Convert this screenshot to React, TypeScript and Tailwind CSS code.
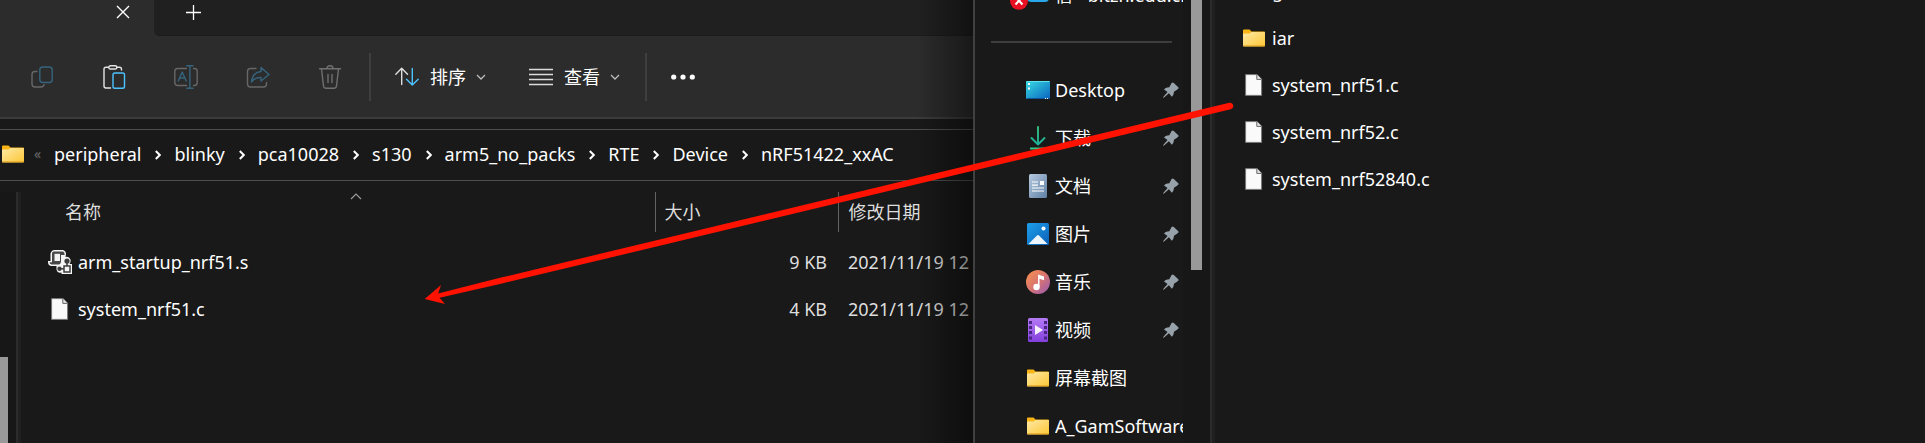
import type { ReactNode } from "react";

const FONT = "font-['Noto_Sans','Noto_Sans_CJK_SC',sans-serif]";

function FolderIcon() {
  return (
    <svg width="22" height="18" viewBox="0 0 22 18" aria-hidden="true">
      <defs>
        <linearGradient id="folder" x1="0" y1="0" x2="1" y2="1">
          <stop offset="0" stopColor="#ffe9a6" />
          <stop offset="1" stopColor="#fcc736" />
        </linearGradient>
      </defs>
      <path d="M0 1.5Q0 .5 1 .5H6.5L8.5 2.5H21Q22 2.5 22 3.500V8H0Z" fill="#f9b515" />
      <path d="M0 5.200Q0 4.400.8 4.400H6.500L8.500 3H22V16.500Q22 17.500 21 17.500H1Q0 17.500 0 16.500Z" fill="url(#folder)" />
      <path d="M.3 16.900H21.700" stroke="#dda021" strokeWidth="1" />
    </svg>
  );
}

function PageIcon() {
  return (
    <svg width="18" height="22" viewBox="0 0 18 22" aria-hidden="true">
      <path d="M.6.6H12L16.6 5.2V21.4H.6Z" fill="#fafafa" stroke="#777" strokeWidth="1" />
      <path d="M11.8.6V5.4H16.6" fill="#e6e6e6" stroke="#666" strokeWidth="1" />
    </svg>
  );
}

function ScriptIcon() {
  return (
    <svg width="24" height="24" viewBox="0 0 24 24" aria-hidden="true">
      <path d="M4 1Q5 0 6.500 0H15Q18 1 18 4L17.500 7Q21 6 22.500 9.500Q23 12 21.500 14H24V24H13.500V22.500Q9.500 23.500 8.500 19.500V16H3Q0 15.500 0 12V11H2.500V3.500Q2.800 2 4 1Z" fill="#f5f5f5" />
      <path d="M5.500 1.500H15Q17 2.500 16.500 5H13V12Q12.500 14.500 10.500 14.500H3.500Q1.500 14 1.500 12.300H4V3.500Q4 2 5.500 1.500Z" fill="#474747" />
      <path d="M6.500 3.800H12V11H6.500Z" fill="#f2f2f2" />
      <circle cx="19" cy="11" r="2.600" fill="#3d3d3d" />
      <path d="M19 13V16" stroke="#3d3d3d" strokeWidth="1.500" />
      <circle cx="11.500" cy="18.800" r="2.200" fill="#3d3d3d" />
      <path d="M12 18.800H16" stroke="#3d3d3d" strokeWidth="1.500" />
      <path d="M16 16H22V22H16Z" fill="#f5f5f5" stroke="#3d3d3d" strokeWidth="1.500" />
    </svg>
  );
}

function DesktopIcon() {
  return (
    <svg width="24" height="18" viewBox="0 0 24 18" aria-hidden="true">
      <defs>
        <linearGradient id="desktop" x1="0" y1="0" x2="1" y2="1">
          <stop offset="0" stopColor="#37dce0" />
          <stop offset="1" stopColor="#0a63c0" />
        </linearGradient>
      </defs>
      <rect width="24" height="18" rx="1" fill="url(#desktop)" />
      <path d="M.5.5H23.500" stroke="#5ee3ef" />
      <path d="M2 2H4V4H2ZM2 6.500H4V8.500H2Z" fill="#fff" />
      <path d="M1 17.500H23" stroke="#0b569b" />
      <path d="M19 17H20V18H19ZM21 17H22V18H21Z" fill="#fff" />
    </svg>
  );
}

function DownloadIcon() {
  return (
    <svg width="18" height="24" viewBox="0 0 18 24" fill="none" aria-hidden="true">
      <defs>
        <linearGradient id="download" x1="0" y1="0" x2="0" y2="24" gradientUnits="userSpaceOnUse">
          <stop offset="0" stopColor="#35c27c" />
          <stop offset="1" stopColor="#17a9a5" />
        </linearGradient>
      </defs>
      <path d="M9 1V18M2.500 12L9 18.500L15.500 12" stroke="url(#download)" strokeWidth="1.900" strokeLinecap="round" strokeLinejoin="round" />
      <path d="M1 22.500H17" stroke="#35cb8b" strokeWidth="2" />
    </svg>
  );
}

function DocumentIcon() {
  return (
    <svg width="18" height="24" viewBox="0 0 18 24" aria-hidden="true">
      <defs>
        <linearGradient id="document" x1="0" y1="0" x2="1" y2="1">
          <stop offset="0" stopColor="#b7cbe0" />
          <stop offset="1" stopColor="#5f7fa3" />
        </linearGradient>
      </defs>
      <rect width="18" height="24" rx="1.500" fill="url(#document)" />
      <path d="M3 8H9M3 11.200H9M3 14H15M3 17H15" stroke="#fff" strokeWidth="1.200" />
      <rect x="11" y="7" width="4" height="4" fill="#fff" />
    </svg>
  );
}

function PictureIcon() {
  return (
    <svg width="22" height="22" viewBox="0 0 22 22" aria-hidden="true">
      <defs>
        <linearGradient id="picture" x1="0" y1="0" x2="1" y2="1">
          <stop offset="0" stopColor="#1ea0ec" />
          <stop offset="1" stopColor="#0a5fb6" />
        </linearGradient>
      </defs>
      <rect width="22" height="22" rx="1.500" fill="url(#picture)" />
      <circle cx="16.500" cy="5.500" r="2" fill="#fff" />
      <path d="M1.500 21L10 12.400Q11 11.500 12 12.400L20.500 21Z" fill="#eef6fd" />
    </svg>
  );
}

function MusicIcon() {
  return (
    <svg width="24" height="24" viewBox="0 0 24 24" aria-hidden="true">
      <defs>
        <linearGradient id="music" x1="0" y1="0" x2="1" y2="1">
          <stop offset="0" stopColor="#fa9249" />
          <stop offset=".5" stopColor="#d97572" />
          <stop offset="1" stopColor="#9559b5" />
        </linearGradient>
      </defs>
      <circle cx="12" cy="12" r="12" fill="url(#music)" />
      <path d="M12 4.500L18 6.500V10.200L13.500 8.800V17H12Z" fill="#fff" />
      <circle cx="10.500" cy="17" r="3.200" fill="#fff" />
    </svg>
  );
}

function VideoIcon() {
  return (
    <svg width="20" height="24" viewBox="0 0 20 24" aria-hidden="true">
      <defs>
        <linearGradient id="video" x1="0" y1="0" x2="0" y2="1">
          <stop offset="0" stopColor="#b57af5" />
          <stop offset="1" stopColor="#8340dd" />
        </linearGradient>
      </defs>
      <rect width="20" height="24" rx="1.500" fill="url(#video)" />
      <path d="M1 3H4V6H1ZM1 8H4V11H1ZM1 13H4V16H1ZM1 18.500H4V21.500H1ZM16 3H19V6H16ZM16 8H19V11H16ZM16 13H19V16H16ZM16 18.500H19V21.500H16Z" fill="#48267f" />
      <path d="M7 7L15 12L7 17Z" fill="#f6f0ff" />
    </svg>
  );
}

function PinIcon() {
  return (
    <svg className="shrink-0" width="16" height="16" viewBox="0 0 16 16" aria-hidden="true">
      <path d="M0 15.200L4.500 10L1 7.500Q2 5.800 6.300 5.300L8.600 1Q9.600 0 10.800 1L15.300 5.200Q16 6 15 7L11 9.700Q10.800 13.300 8.800 14.800L5.900 11.300L.8 15.800Z" fill="#97a1a9" />
    </svg>
  );
}

function CloudErrorIcon() {
  return (
    <svg width="40" height="24" viewBox="0 0 40 24" aria-hidden="true">
      <rect x="17" y="0" width="22" height="16" rx="4" fill="#28a8ea" />
      <circle cx="9" cy="14.800" r="9" fill="#e81123" />
      <path d="M5.500 11L12.500 18.500M12.500 11L5.500 18.500" stroke="#fff" strokeWidth="2" />
    </svg>
  );
}

function Stroke({ children, size = 24 }: { children: ReactNode; size?: number }) {
  return (
    <svg width={size} height={size} viewBox={`0 0 ${size} ${size}`} fill="none" strokeWidth="1.400" strokeLinecap="round" strokeLinejoin="round" aria-hidden="true">
      {children}
    </svg>
  );
}

const tools: { label: string; icon: ReactNode }[] = [
  {
    label: "复制",
    icon: (
      <Stroke>
        <path d="M7 6.500H4.800Q2 6.500 2 9.500V19Q2 22 5 22H11Q13.500 22 14 19.700" stroke="#676767" />
        <rect x="9.800" y="2" width="12.400" height="15.500" rx="3" stroke="#36647e" />
      </Stroke>
    ),
  },
  {
    label: "粘贴",
    icon: (
      <Stroke>
        <path d="M6.500 2.200H4Q2 2.200 2 4.200V21Q2 23 4 23H8.500M15 2.200H17.500Q19.500 2.200 19.500 4.200V5" stroke="#e4e4e4" />
        <rect x="6.800" y=".8" width="8" height="3.200" rx="1.600" stroke="#e4e4e4" />
        <rect x="11" y="8" width="11.500" height="15.200" rx="1.800" stroke="#4cc2ff" />
      </Stroke>
    ),
  },
  {
    label: "重命名",
    icon: (
      <Stroke>
        <path d="M12.500 3.500H3.800Q.8 3.500 .8 6.500V17.500Q.8 20.500 3.800 20.500H12.500M19.500 3.500H20.500Q23.200 3.500 23.200 6.500V17.500Q23.200 20.500 20.500 20.500H19.500" stroke="#676767" />
        <path d="M4.300 16L8.200 7L12.200 16M5.700 13H10.900M15.900 1V23M12.800 .8H19M12.800 23.200H19" stroke="#36647e" />
      </Stroke>
    ),
  },
  {
    label: "共享",
    icon: (
      <Stroke>
        <path d="M10 3.500H4.500Q1.500 3.500 1.500 6.500V19Q1.500 22 4.500 22H17.500Q20.500 22 20.500 19V17.500" stroke="#676767" />
        <path d="M15 2.500L23 9.500L15 16V12.500Q9 12 5.500 17Q6.500 7.500 15 6.500Z" stroke="#36647e" />
      </Stroke>
    ),
  },
  {
    label: "删除",
    icon: (
      <Stroke>
        <path d="M1.500 3.800H22.500M3.500 4L5.500 21Q5.800 23.200 8 23.200H16Q18.200 23.200 18.500 21L20.500 4M9 3.500Q9 .8 12 .8Q15 .8 15 3.500M10 9.500V17.500M14 9.500V17.500" stroke="#707070" />
      </Stroke>
    ),
  },
];

function ChevronDown() {
  return (
    <svg width="10" height="6" viewBox="0 0 10 6" fill="none" aria-hidden="true">
      <path d="M1 1L5 5L9 1" stroke="#bdbdbd" strokeWidth="1.300" />
    </svg>
  );
}

const crumbs = ["peripheral", "blinky", "pca10028", "s130", "arm5_no_packs", "RTE", "Device", "nRF51422_xxAC"];

const files = [
  { name: "arm_startup_nrf51.s", size: "9 KB", date: "2021/11/19 12", icon: <ScriptIcon /> },
  { name: "system_nrf51.c", size: "4 KB", date: "2021/11/19 12", icon: <PageIcon /> },
];

const places = [
  { name: "Desktop", icon: <DesktopIcon />, pinned: true },
  { name: "下载", icon: <DownloadIcon />, pinned: true },
  { name: "文档", icon: <DocumentIcon />, pinned: true },
  { name: "图片", icon: <PictureIcon />, pinned: true },
  { name: "音乐", icon: <MusicIcon />, pinned: true },
  { name: "视频", icon: <VideoIcon />, pinned: true },
  { name: "屏幕截图", icon: <FolderIcon />, pinned: false },
  { name: "A_GamSoftware", icon: <FolderIcon />, pinned: false },
];

const targets = [
  { name: "gcc", icon: <FolderIcon /> },
  { name: "iar", icon: <FolderIcon /> },
  { name: "system_nrf51.c", icon: <PageIcon /> },
  { name: "system_nrf52.c", icon: <PageIcon /> },
  { name: "system_nrf52840.c", icon: <PageIcon /> },
];

function Splitter() {
  return <div className="w-[5px] shrink-0 border-l-2 border-[#2b2b2b] bg-[#202020]" />;
}

function DestinationWindow() {
  return (
    <section className="relative flex min-w-0 flex-col overflow-hidden border-r-2 border-[#404040] bg-[#191919]">
      <div className="flex h-9 shrink-0 bg-[#202020]">
        <div className="flex w-[154px] items-start justify-end bg-[#2c2c2c] pr-6">
          <button aria-label="关闭标签页" className="pt-[5px]">
            <svg width="14" height="14" viewBox="0 0 14 14" aria-hidden="true">
              <path d="M1 1L13 13M13 1L1 13" stroke="#fff" strokeWidth="1.400" />
            </svg>
          </button>
        </div>
        <div className="flex-1 bg-[#2c2c2c]">
          <div className="h-full rounded-bl-md border-b border-[#1c1c1c] bg-[#202020] pl-8">
            <button aria-label="新标签页" className="pt-[5px]">
              <svg width="15" height="15" viewBox="0 0 15 15" aria-hidden="true">
                <path d="M7.500 0V15M0 7.500H15" stroke="#fff" strokeWidth="1.300" />
              </svg>
            </button>
          </div>
        </div>
      </div>

      <div className="flex h-[83px] shrink-0 items-center border-b-2 border-[#3b3b3b] bg-[#2c2c2c] pl-1.5 text-white">
        {tools.map((tool) => (
          <button key={tool.label} aria-label={tool.label} className="flex w-[72px] justify-center">
            {tool.icon}
          </button>
        ))}
        <div className="ml-[3px] h-12 w-0.5 bg-[#3f3f3f]" />
        <button className="ml-6 flex items-center">
          <Stroke>
            <path d="M6.700 19.500V3.500M.8 9.200L6.700 3.300L12.500 9.200" stroke="#dedede" />
            <path d="M17.300 3.500V20M11.500 14.200L17.300 20L23.200 14.200" stroke="#4cc2ff" />
          </Stroke>
          <span className="ml-[11px] mr-2.5">排序</span>
          <ChevronDown />
        </button>
        <button className="ml-[43px] flex items-center">
          <svg width="24" height="24" viewBox="0 0 24 24" aria-hidden="true">
            <path d="M0 4.500H24M0 9.500H24M0 14.500H24M0 19.500H24" stroke="#dcdcdc" strokeWidth="1.500" />
          </svg>
          <span className="ml-[11px] mr-2.5">查看</span>
          <ChevronDown />
        </button>
        <div className="ml-[25px] h-12 w-0.5 bg-[#3f3f3f]" />
        <button aria-label="查看更多" className="ml-6">
          <svg width="24" height="6" viewBox="0 0 24 6" fill="#fff" aria-hidden="true">
            <circle cx="2.700" cy="3" r="2.600" />
            <circle cx="12" cy="3" r="2.600" />
            <circle cx="21.300" cy="3" r="2.600" />
          </svg>
        </button>
      </div>

      <nav aria-label="路径" className="mt-[10px] flex h-[52px] shrink-0 items-center border-y border-[#4d4d4d] pb-0.5 pl-0.5 text-white">
        <FolderIcon />
        <span className="w-[30px] pl-2.5 text-sm text-[#6a6a6a]">«</span>
        {crumbs.map((crumb, i) => (
          <div key={crumb} className="flex items-center">
            {i > 0 && (
              <svg className="ml-3.5 mr-[13px] mt-0.5" width="6" height="10" viewBox="0 0 6 10" fill="none" aria-hidden="true">
                <path d="M.8 1L4.800 5L.8 9" stroke="#fff" strokeWidth="2" />
              </svg>
            )}
            <a href="#">{crumb}</a>
          </div>
        ))}
      </nav>

      <div className="mt-[11px] flex min-h-0 flex-1">
        <div className="flex w-4 shrink-0 items-end bg-[#171717]">
          <div className="h-[86px] w-2 bg-[#999999]" />
        </div>
        <Splitter />
        <div className="min-w-0 flex-1 overflow-hidden">
          <table className="w-full table-fixed border-collapse text-left">
            <thead>
              <tr className="h-10 text-[#dedede]">
                <th className="relative w-[634px] border-r border-[#636363] p-0 pl-11 font-normal">
                  名称
                  <svg className="absolute left-[329px] top-px" width="12" height="7" viewBox="0 0 12 7" fill="none" aria-hidden="true">
                    <path d="M1 6L6 1L11 6" stroke="#9a9a9a" strokeWidth="1.200" />
                  </svg>
                </th>
                <th className="w-[183px] border-r border-[#636363] p-0 pl-[9px] font-normal">大小</th>
                <th className="p-0 pl-2.5 font-normal">修改日期</th>
              </tr>
            </thead>
            <tbody>
              <tr className="h-1.5" aria-hidden="true" />
              {files.map((file) => (
                <tr key={file.name} className="h-[47px] text-[#dedede]">
                  <td className="p-0 pl-[27px]">
                    <div className="flex items-center gap-1.5 text-white">
                      <span className="flex w-6 justify-center">{file.icon}</span>
                      {file.name}
                    </div>
                  </td>
                  <td className="p-0 pr-[11px] text-right">{file.size}</td>
                  <td className="whitespace-nowrap p-0 pl-2.5">{file.date}</td>
                </tr>
              ))}
            </tbody>
          </table>
        </div>
      </div>
      <div className="pointer-events-none absolute inset-y-0 right-0 w-14 bg-linear-to-r from-transparent to-black/45" />
    </section>
  );
}

function SourceWindow() {
  return (
    <section className="flex min-w-0 overflow-hidden bg-[#191919] text-white">
      <nav aria-label="导航窗格" className="w-[208px] shrink-0">
        <a href="#" className="-mt-[29px] flex h-12 items-center pl-5">
          <svg width="6" height="10" viewBox="0 0 6 10" fill="none" aria-hidden="true">
            <path d="M1 1L5 5L1 9" stroke="#8a8a8a" />
          </svg>
          <span className="ml-[9px] mt-1.5 w-10 shrink-0">
            <CloudErrorIcon />
          </span>
          <span className="ml-[5px] overflow-hidden whitespace-nowrap">信 - bitzh.edu.cn</span>
        </a>
        <div className="mb-[23px] ml-4 mr-[11px] mt-[22px] h-0.5 bg-[#3d3d3d]" />
        <ul>
          {places.map((place) => (
            <li key={place.name}>
              <a href="#" className="flex h-12 items-center pl-[51px]">
                <span className="flex w-6 shrink-0 justify-center">{place.icon}</span>
                <span className="ml-[5px] min-w-0 flex-1 overflow-hidden whitespace-nowrap">{place.name}</span>
                {place.pinned && (
                  <span className="pr-1">
                    <PinIcon />
                  </span>
                )}
              </a>
            </li>
          ))}
        </ul>
      </nav>
      <div className="w-[27px] shrink-0 bg-[#171717] pl-2">
        <div className="h-[270px] w-[11px] bg-[#999999]" />
      </div>
      <Splitter />
      <ul className="-mt-[33px] min-w-0 flex-1 pl-[27px]">
        {targets.map((target) => (
          <li key={target.name} className="flex h-[47px] items-center gap-1.5">
            <span className="flex w-6 justify-center">{target.icon}</span>
            {target.name}
          </li>
        ))}
      </ul>
    </section>
  );
}

export default function App() {
  return (
    <main className={`relative grid h-screen grid-cols-[975fr_950fr] grid-rows-1 overflow-hidden bg-[#191919] text-[18px] leading-6 ${FONT}`}>
      <DestinationWindow />
      <SourceWindow />
      <svg className="pointer-events-none absolute left-0 top-0" width="1925" height="443" viewBox="0 0 1925 443" fill="#ff1200" aria-hidden="true">
        <path d="M424.700 299L441 285L438.200 293.500L500 277.800L1229.300 102.800A3.200 3.200 0 0 1 1230.700 109.200L500 284L439.500 297.800L445 304Z" />
      </svg>
    </main>
  );
}
